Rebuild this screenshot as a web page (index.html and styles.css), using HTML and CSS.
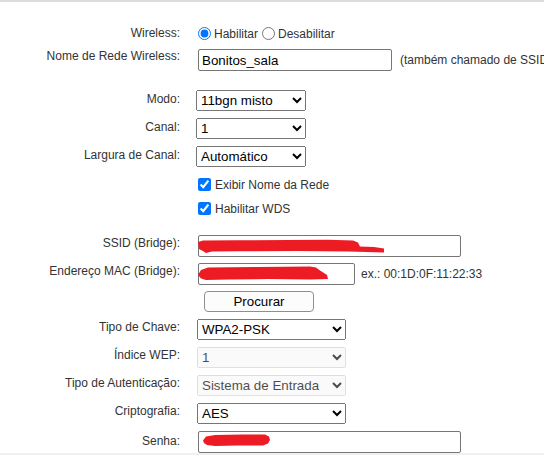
FILE: index.html
```html
<!DOCTYPE html>
<html lang="pt">
<head>
<meta charset="utf-8">
<title>Wireless</title>
<link rel="stylesheet" href="styles.css">
</head>
<body>
<div class="page">
  <div class="row r-radio">
    <div class="lbl">Wireless:</div>
    <div class="ctl">
      <label class="opt first"><input type="radio" name="wl" checked>Habilitar</label>
      <label class="opt"><input type="radio" name="wl">Desabilitar</label>
    </div>
  </div>
  <div class="row">
    <div class="lbl l-input">Nome de Rede Wireless:</div>
    <div class="ctl">
      <input class="txt w-name" type="text" value="Bonitos_sala">
      <span class="note note-ssid">(também chamado de SSID)</span>
    </div>
  </div>
  <div class="spacer"></div>
  <div class="row">
    <div class="lbl l-sel">Modo:</div>
    <div class="ctl">
      <select class="sel sel-s"><option>11bgn misto</option></select>
    </div>
  </div>
  <div class="row">
    <div class="lbl l-sel">Canal:</div>
    <div class="ctl">
      <select class="sel sel-s"><option>1</option></select>
    </div>
  </div>
  <div class="row">
    <div class="lbl l-sel">Largura de Canal:</div>
    <div class="ctl">
      <select class="sel sel-s"><option>Automático</option></select>
    </div>
  </div>
  <div class="row check">
    <div class="lbl"></div>
    <div class="ctl">
      <label class="chk"><input type="checkbox" checked>Exibir Nome da Rede</label>
    </div>
  </div>
  <div class="row check">
    <div class="lbl"></div>
    <div class="ctl">
      <label class="chk"><input type="checkbox" checked>Habilitar WDS</label>
    </div>
  </div>
  <div class="spacer"></div>
  <div class="row">
    <div class="lbl l-in2">SSID (Bridge):</div>
    <div class="ctl">
      <span class="redact">
        <input class="txt w-long" type="text" value="">
        <svg class="scrib scrib-ssid" width="190" height="16" viewBox="0 0 190 16" aria-hidden="true">
          <path d="M0,3 L5,1.5 L40,1.2 L90,1 L130,0.8 L155,1.5 L160,3.5 L162,7.5 L176,8 L186,9.5 L186,13.5 L150,12.5 L100,12 L40,12.3 L14,12.5 L8,14 L4,11.5 L1,10 Z" fill="#ed1c24"/>
        </svg>
      </span>
    </div>
  </div>
  <div class="row">
    <div class="lbl l-in2">Endereço MAC (Bridge):</div>
    <div class="ctl">
      <span class="redact">
        <input class="txt w-mac" type="text" value="">
        <svg class="scrib scrib-mac" width="132" height="16" viewBox="0 0 132 16" aria-hidden="true">
          <path d="M0,9 L3,4 L10,1.5 L60,1 L112,0.5 L118,1.5 L122,4.5 L126,7 L129,9 L130,13 L112,13.5 L70,13 L30,13.5 L8,14 L3,12.5 Z" fill="#ed1c24"/>
        </svg>
      </span>
      <span class="note note-mac">ex.: 00:1D:0F:11:22:33</span>
    </div>
  </div>
  <div class="row">
    <div class="lbl"></div>
    <div class="ctl">
      <button class="btn" type="button">Procurar</button>
    </div>
  </div>
  <div class="row">
    <div class="lbl l-in2">Tipo de Chave:</div>
    <div class="ctl">
      <select class="sel sel-l"><option>WPA2-PSK</option></select>
    </div>
  </div>
  <div class="row">
    <div class="lbl l-in2">Índice WEP:</div>
    <div class="ctl">
      <select class="sel sel-l" disabled><option>1</option></select>
    </div>
  </div>
  <div class="row">
    <div class="lbl l-in2">Tipo de Autenticação:</div>
    <div class="ctl">
      <select class="sel sel-l" disabled><option>Sistema de Entrada</option></select>
    </div>
  </div>
  <div class="row">
    <div class="lbl l-in2">Criptografia:</div>
    <div class="ctl">
      <select class="sel sel-l"><option>AES</option></select>
    </div>
  </div>
  <div class="row">
    <div class="lbl l-pass">Senha:</div>
    <div class="ctl">
      <span class="redact">
        <input class="txt w-long" type="password" value="">
        <svg class="scrib scrib-pass" width="70" height="14" viewBox="0 0 70 14" aria-hidden="true">
          <path d="M0,6.5 L3,2.5 L12,1 L40,0.5 L62,0.5 L66,2.5 L67,6 L65,9.5 L60,11.5 L35,11.5 L12,12 L4,11 L1,9 Z" fill="#ed1c24"/>
        </svg>
      </span>
    </div>
  </div>
</div>
</body>
</html>
```

FILE: styles.css
```css
html, body {
  margin: 0;
  padding: 0;
}

body {
  background: #f0f0f0;
  font-family: "Liberation Sans", Arial, sans-serif;
  font-size: 12px;
  color: #333;
  overflow: hidden;
}

.page {
  height: 453px;
  box-sizing: border-box;
  background: #fff;
  border-top: 2px solid #dcdcdc;
  padding-top: 19px;
  overflow: hidden;
}

.row {
  display: flex;
  align-items: flex-start;
  height: 28px;
  white-space: nowrap;
}

.row.check {
  height: 24px;
}

.spacer {
  height: 13px;
}

.lbl {
  flex: none;
  width: 180px;
  box-sizing: border-box;
  text-align: right;
  line-height: 14px;
  padding-top: 1px;
}

.r-radio .lbl { padding-top: 5px; }
.lbl.l-input { padding-top: 0; }
.lbl.l-sel { padding-top: 2px; }
.lbl.l-in2 { padding-top: 1px; }
.lbl.l-pass { padding-top: 3px; }

.ctl {
  flex: none;
  display: flex;
  align-items: center;
  margin-left: 16px;
}

.r-radio .ctl {
  padding-top: 6px;
}

.opt {
  display: inline-flex;
  align-items: center;
  height: 13px;
  line-height: 14px;
  color: #333;
}

.opt input {
  width: 13px;
  height: 13px;
  margin: 0 3px 0 0;
}

.opt.first {
  margin-right: 4px;
}

.opt.first input {
  margin-left: 2px;
}

.chk {
  display: inline-flex;
  align-items: center;
  margin-top: 4px;
  height: 13px;
  line-height: 14px;
}

.chk input {
  width: 13px;
  height: 13px;
  margin: 0 4px 0 2px;
}

.txt {
  box-sizing: border-box;
  height: 22px;
  margin: 0 0 0 2px;
  padding: 0 3px;
  border: 1px solid #767676;
  border-radius: 2px;
  background: #fff;
  font: 13.333px "Liberation Sans", Arial, sans-serif;
  color: #000;
  outline: none;
}

.w-name { width: 194px; }
.w-long { width: 263px; }
.w-mac { width: 157px; }

.note { line-height: 14px; }
.note-ssid { margin-left: 8px; }
.note-mac { margin-left: 6px; }

.sel {
  box-sizing: border-box;
  height: 21px;
  margin: 0;
  font: 13.333px "Liberation Sans", Arial, sans-serif;
  color: #000;
}

.sel-s { width: 110px; }
.sel-l { width: 149px; margin-left: 1px; }

.btn {
  box-sizing: border-box;
  width: 110px;
  height: 21px;
  margin-left: 8px;
  padding: 0;
  border: 1px solid #8f8f8f;
  border-radius: 4px;
  background: #fcfcfc;
  font: 13.333px "Liberation Sans", Arial, sans-serif;
  color: #000;
}

.redact {
  position: relative;
  display: inline-block;
  line-height: 0;
}

.scrib {
  position: absolute;
}

.scrib-ssid { left: 2px; top: 4px; }
.scrib-mac { left: 2px; top: 3px; }
.scrib-pass { left: 7px; top: 3px; }
```
